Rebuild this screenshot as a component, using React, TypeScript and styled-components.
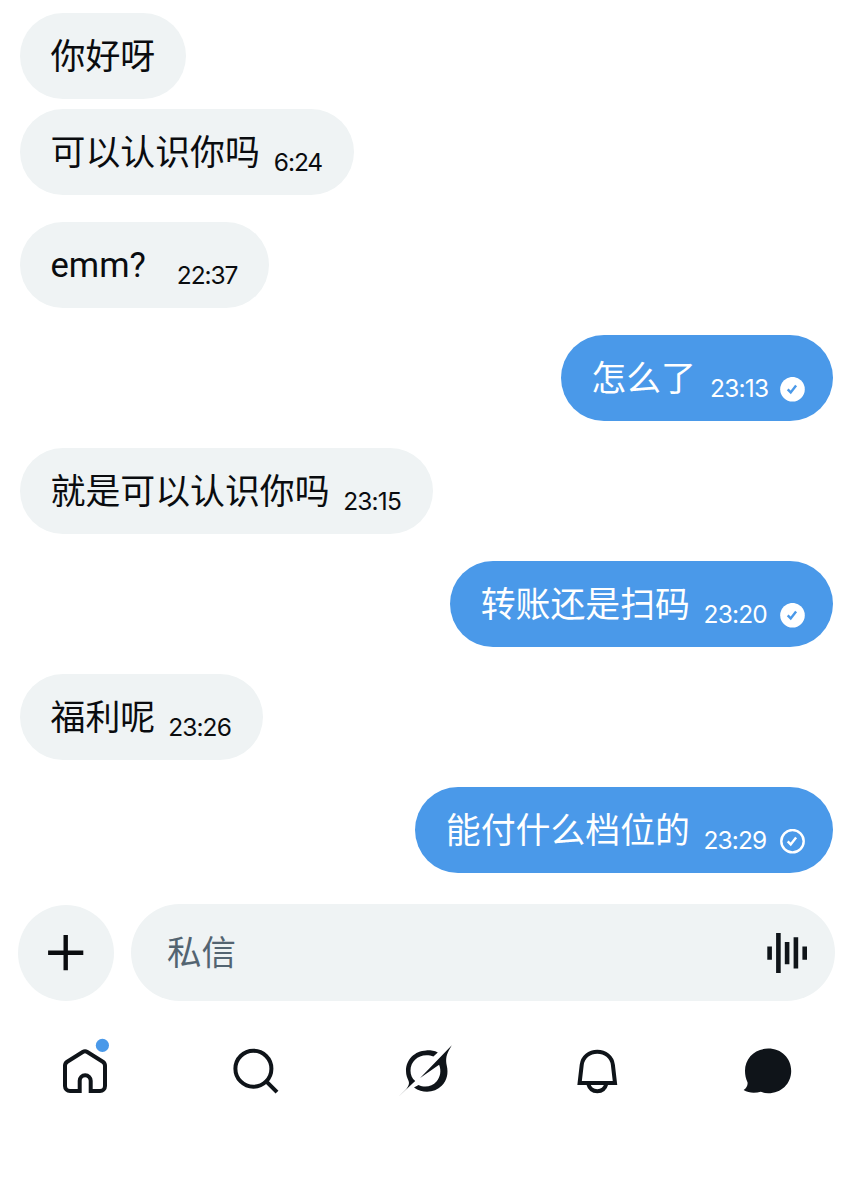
import React from 'react';
import styled, { createGlobalStyle } from 'styled-components';

const GlobalStyle = createGlobalStyle`
  * { box-sizing: border-box; }
  body {
    margin: 0;
    background: #fff;
    font-family: Roboto, 'Noto Sans CJK SC', sans-serif;
    color: #0a0c0f;
  }
`;

const Screen = styled.main`
  display: flex;
  flex-direction: column;
  width: 853px;
  height: 1200px;
  padding-top: 13px;
  background: #fff;
  overflow: hidden;
`;

const Thread = styled.section`
  display: flex;
  flex-direction: column;
  padding: 0 20px;
`;

const Bubble = styled.div<{ $mine?: boolean; $tight?: boolean }>`
  display: flex;
  align-items: center;
  align-self: ${(p) => (p.$mine ? 'flex-end' : 'flex-start')};
  height: 86px;
  margin-bottom: ${(p) => (p.$tight ? 10 : 27)}px;
  padding: 0 ${(p) => (p.$mine ? 28 : 31)}px 0 30.5px;
  border-radius: 43px;
  background: ${(p) => (p.$mine ? '#4a99e9' : '#eff3f4')};
  color: ${(p) => (p.$mine ? '#fff' : '#0a0c0f')};
  &:last-child { margin-bottom: 0; }
`;

const Message = styled.span<{ $latin?: boolean }>`
  padding-top: ${(p) => (p.$latin ? 0 : 4)}px;
  font-size: ${(p) => (p.$latin ? 34.6 : 34.9)}px;
  line-height: 50px;
  white-space: nowrap;
`;

const Time = styled.time<{ $width: number; $gap: number; $spacing: number }>`
  width: ${(p) => p.$width}px;
  margin-left: ${(p) => p.$gap}px;
  padding-top: 20px;
  font-family: Inter, sans-serif;
  font-size: 24.5px;
  line-height: 30px;
  letter-spacing: ${(p) => p.$spacing}px;
  white-space: nowrap;
  font-feature-settings: 'calt' 0;
`;

const Receipt = styled.svg`
  flex: none;
  width: 25px;
  height: 25px;
  margin: 22px 0 0 12px;
`;

const Composer = styled.section`
  display: flex;
  align-items: center;
  gap: 17px;
  margin-top: 31px;
  padding: 0 18px;
`;

const AddButton = styled.button`
  display: grid;
  place-items: center;
  width: 96px;
  height: 96px;
  padding: 0;
  border: 0;
  border-radius: 50%;
  background: #eff3f4;
`;

const Field = styled.div`
  display: flex;
  align-items: center;
  justify-content: space-between;
  flex: 1;
  height: 97px;
  padding: 0 27px 0 36px;
  border-radius: 49px;
  background: #eff3f4;
`;

const Placeholder = styled.span`
  color: #536471;
  font-size: 34.5px;
  line-height: 50px;
`;

const TabBar = styled.nav`
  display: flex;
  margin-top: 40px;
`;

const Tab = styled.button`
  display: grid;
  place-items: center;
  flex: 1;
  height: 60px;
  padding: 0;
  border: 0;
  background: none;
  color: #0f1419;
`;

const TabIcon = styled.svg`
  width: 60px;
  height: 60px;
  overflow: visible;
`;

type Item = {
  text: string;
  time?: string;
  width?: number;
  gap?: number;
  spacing?: number;
  mine?: boolean;
  tight?: boolean;
  latin?: boolean;
  receipt?: 'read' | 'sent';
};

const items: Item[] = [
  { text: '你好呀', tight: true },
  { text: '可以认识你吗', time: '6:24', width: 49, gap: 14, spacing: -1.1 },
  { text: 'emm?', time: '22:37', width: 61, gap: 31, spacing: -1.1, latin: true },
  { text: '怎么了', time: '23:13', width: 58, gap: 14, mine: true, receipt: 'read', spacing: -0.8 },
  { text: '就是可以认识你吗', time: '23:15', width: 58.5, gap: 13.5, spacing: -0.8 },
  { text: '转账还是扫码', time: '23:20', width: 64.5, gap: 13.5, mine: true, receipt: 'read', spacing: -0.8 },
  { text: '福利呢', time: '23:26', width: 63.5, gap: 13, spacing: -0.9 },
  { text: '能付什么档位的', time: '23:29', width: 64.5, gap: 13.5, mine: true, receipt: 'sent', spacing: -0.9 },
];

const ReceiptMark = ({ kind }: { kind: 'read' | 'sent' }) => (
  <Receipt viewBox="0 0 25 25" fill="none">
    {kind === 'read' ? (
      <circle cx="12.5" cy="12.2" r="12.3" fill="#fff" />
    ) : (
      <circle cx="12.5" cy="12.2" r="11.2" stroke="#fff" strokeWidth="2.4" />
    )}
    <path d="M7.7 12.4l3 3 5.4-7" stroke={kind === 'read' ? '#4a99e9' : '#fff'} strokeWidth="2.4" />
  </Receipt>
);

export default function App() {
  return (
    <>
      <GlobalStyle />
      <Screen>
        <Thread>
          {items.map((m) => (
            <Bubble key={m.text} $mine={m.mine} $tight={m.tight}>
              <Message $latin={m.latin}>{m.text}</Message>
              {m.time && (
                <Time $width={m.width ?? 60} $gap={m.gap ?? 14} $spacing={m.spacing ?? 0}>
                  {m.time}
                </Time>
              )}
              {m.receipt && <ReceiptMark kind={m.receipt} />}
            </Bubble>
          ))}
        </Thread>

        <Composer>
          <AddButton aria-label="添加">
            <svg width="36" height="36" viewBox="0 0 36 36" stroke="#0a0c0f" strokeWidth="4.4">
              <path d="M.1 17.7h35.2M17.7.1v35.2" />
            </svg>
          </AddButton>
          <Field>
            <Placeholder>私信</Placeholder>
            <svg width="41" height="40" viewBox="0 0 41 40" fill="#0f1419">
              <path d="M.3 13.4h4.6v13.3H.3zM9.1 0h4.6v40H9.1zM17.8 9h4.6v22.3h-4.6zM26.6 4.3h4.6v31.3h-4.6zM35.4 13.4H40v13.3h-4.6z" />
            </svg>
          </Field>
        </Composer>

        <TabBar>
          <Tab aria-label="主页">
            <TabIcon viewBox="0 0 60 60" fill="none">
              <path
                d="M24.7 50H15a5 5 0 0 1-5-5V24.7q0-2.6 2.2-4L27.7 11q2.3-1.4 4.6 0l15.5 9.7q2.2 1.4 2.2 4V45a5 5 0 0 1-5 5h-9.3V39.7a5.5 5.5 0 0 0-11 0z"
                stroke="currentColor"
                strokeWidth="4"
              />
              <circle cx="47.4" cy="4.4" r="6.6" fill="#4a99e9" />
            </TabIcon>
          </Tab>
          <Tab aria-label="搜索">
            <TabIcon viewBox="0 0 60 60" fill="none" stroke="currentColor" strokeWidth="4">
              <circle cx="27.4" cy="27.7" r="18" />
              <path d="M40 40.2l11 11" />
            </TabIcon>
          </Tab>
          <Tab aria-label="Grok">
            <TabIcon viewBox="0 0 60 60" fill="currentColor">
              <path d="M41.8 11.4C38 9.7 34 9.2 30.2 9.4 18.8 9.8 10 18.4 10 29.9c0 4.3 1.3 7.1 2.6 10 1.2 3.2-.8 6.2-2.5 8.4L2.6 55.6l16.6-15.5c-3.1-2.5-4.7-6.1-4.7-10.4 0-8.8 7-15.5 15.9-15.5 2.6 0 5 .5 7 1.2z" />
              <path d="M55.8 4.2L24.1 37l19-13.2c2.4 6 1.3 12.3-2.6 16.7-4.4 5.1-11.7 6.5-18 3.5l-4.5 2.4c9.2 6.5 20.8 5.2 27.7-1.7 5.4-5.3 6.8-12.6 5.1-20-1.4-6.7-.5-11.2 3.3-17.5z" />
            </TabIcon>
          </Tab>
          <Tab aria-label="通知">
            <TabIcon viewBox="0 0 60 60" fill="none" stroke="currentColor" strokeWidth="4">
              <path d="M12.6 42l2.1-18C15.7 15.8 22.4 10.8 30.3 10.8S44.9 15.8 45.9 24L48 42z" />
              <path d="M21.3 43c1.2 4.5 4.7 7.2 9 7.2s7.8-2.7 9-7.2" />
            </TabIcon>
          </Tab>
          <Tab aria-label="私信">
            <TabIcon viewBox="0 0 60 60" fill="currentColor">
              <path d="M30.2 7.6C43.4 7.6 53.2 17.2 53.2 29.9S43.3 52.2 30.2 52.2c-2.8 0-5-.5-7.4-1.4-5.3 1.4-12 1.6-17.2-1.7 2.9-2.1 4.4-4.8 3.9-7.8C7.8 37.8 7 34 7 29.8 7 17 17 7.6 30.2 7.6z" />
            </TabIcon>
          </Tab>
        </TabBar>
      </Screen>
    </>
  );
}
